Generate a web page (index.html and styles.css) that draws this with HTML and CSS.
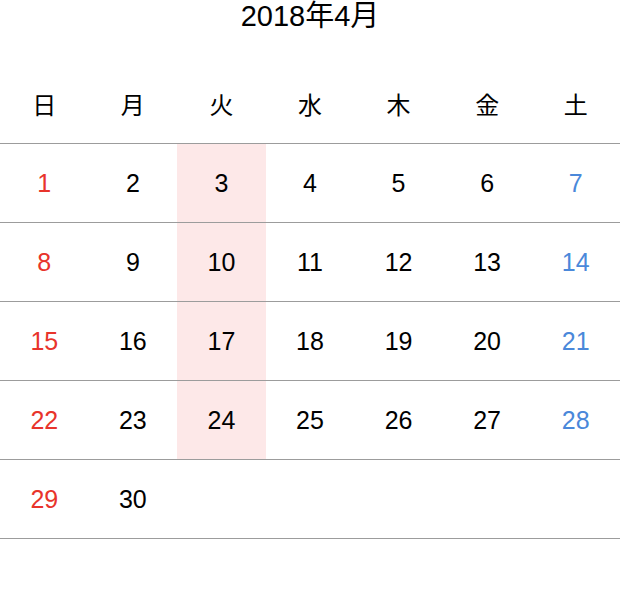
FILE: index.html
```html
<!DOCTYPE html>
<html lang="ja">
<head>
<meta charset="utf-8">
<link rel="stylesheet" href="styles.css">
</head>
<body>
<div class="calendar">
  <div class="title">2018年4月</div>
  <div class="weekdays">
    <div>日</div><div>月</div><div>火</div><div>水</div><div>木</div><div>金</div><div>土</div>
  </div>
  <div class="weeks">
    <div class="week">
      <div class="sun">1</div><div>2</div><div class="tue">3</div><div>4</div><div>5</div><div>6</div><div class="sat">7</div>
    </div>
    <div class="week">
      <div class="sun">8</div><div>9</div><div class="tue">10</div><div>11</div><div>12</div><div>13</div><div class="sat">14</div>
    </div>
    <div class="week">
      <div class="sun">15</div><div>16</div><div class="tue">17</div><div>18</div><div>19</div><div>20</div><div class="sat">21</div>
    </div>
    <div class="week">
      <div class="sun">22</div><div>23</div><div class="tue">24</div><div>25</div><div>26</div><div>27</div><div class="sat">28</div>
    </div>
    <div class="week">
      <div class="sun">29</div><div>30</div><div></div><div></div><div></div><div></div><div></div>
    </div>
  </div>
</div>
</body>
</html>
```
FILE: styles.css
```css
html, body {
  margin: 0;
  padding: 0;
  background: #fff;
}
body {
  font-family: "Liberation Sans", "Noto Sans CJK JP", sans-serif;
  color: #000;
}
.calendar {
  width: 620px;
}
.title {
  height: 32px;
  line-height: 32px;
  font-size: 29px;
  text-align: center;
  margin-bottom: 32px;
}
.weekdays {
  display: grid;
  grid-template-columns: repeat(7, 1fr);
  height: 79px;
  font-family: "Noto Sans CJK JP", sans-serif;
  font-size: 24px;
}
.weekdays > div {
  display: flex;
  align-items: center;
  justify-content: center;
}
.weeks {
  border-bottom: 1px solid #9c9c9c;
}
.week {
  display: grid;
  grid-template-columns: repeat(7, 1fr);
  height: 78px;
  border-top: 1px solid #9c9c9c;
  font-size: 25px;
}
.week > div {
  display: flex;
  align-items: center;
  justify-content: center;
}
.week > .tue {
  background: #fde8e8;
}
.week > .sun {
  color: #e8342b;
}
.week > .sat {
  color: #4a88da;
}
```
